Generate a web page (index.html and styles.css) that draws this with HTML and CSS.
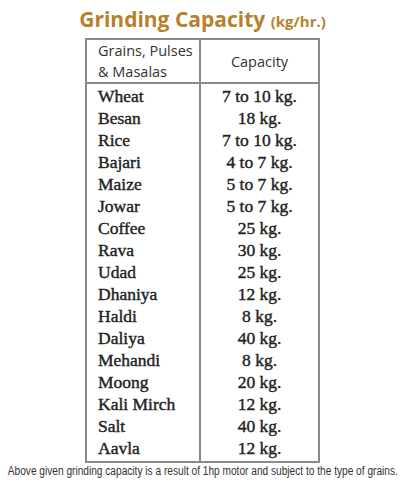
FILE: index.html
```html
<!DOCTYPE html>
<html>
<head>
<meta charset="utf-8">
<link rel="stylesheet" href="styles.css">
</head>
<body>
<div class="page">
  <h1 class="title">Grinding Capacity <span class="unit">(kg/hr.)</span></h1>
  <table class="cap">
    <thead>
      <tr>
        <th class="col-name">Grains, Pulses<br>&amp; Masalas</th>
        <th class="col-val">Capacity</th>
      </tr>
    </thead>
    <tbody>
      <tr><td class="name">Wheat</td><td class="val">7 to 10 kg.</td></tr>
      <tr><td class="name">Besan</td><td class="val">18 kg.</td></tr>
      <tr><td class="name">Rice</td><td class="val">7 to 10 kg.</td></tr>
      <tr><td class="name">Bajari</td><td class="val">4 to 7 kg.</td></tr>
      <tr><td class="name">Maize</td><td class="val">5 to 7 kg.</td></tr>
      <tr><td class="name">Jowar</td><td class="val">5 to 7 kg.</td></tr>
      <tr><td class="name">Coffee</td><td class="val">25 kg.</td></tr>
      <tr><td class="name">Rava</td><td class="val">30 kg.</td></tr>
      <tr><td class="name">Udad</td><td class="val">25 kg.</td></tr>
      <tr><td class="name">Dhaniya</td><td class="val">12 kg.</td></tr>
      <tr><td class="name">Haldi</td><td class="val">8 kg.</td></tr>
      <tr><td class="name">Daliya</td><td class="val">40 kg.</td></tr>
      <tr><td class="name">Mehandi</td><td class="val">8 kg.</td></tr>
      <tr><td class="name">Moong</td><td class="val">20 kg.</td></tr>
      <tr><td class="name">Kali Mirch</td><td class="val">12 kg.</td></tr>
      <tr><td class="name">Salt</td><td class="val">40 kg.</td></tr>
      <tr><td class="name">Aavla</td><td class="val">12 kg.</td></tr>
    </tbody>
  </table>
  <p class="note">Above given grinding capacity is a result of 1hp motor and subject to the type of grains.</p>
</div>
</body>
</html>
```
FILE: styles.css
```css
html, body {
  margin: 0;
  padding: 0;
  background: #ffffff;
}
.page {
  width: 405px;
  height: 500px;
  display: flex;
  flex-direction: column;
  align-items: center;
}
.title {
  margin: 5px 0 0 0;
  height: 29px;
  font-family: "Open Sans", "Noto Sans", sans-serif;
  font-weight: 700;
  font-size: 21px;
  line-height: 29px;
  color: #b7812c;
}
.unit {
  font-size: 15px;
  line-height: 29px;
}
.cap {
  margin-top: 4px;
  width: 235px;
  border-collapse: collapse;
  border: 2px solid #8a8a8a;
}
.cap th {
  font-family: "Open Sans", "Noto Sans", sans-serif;
  font-weight: 400;
  font-size: 14.5px;
  line-height: 21px;
  color: #333;
  height: 41px;
  padding: 0;
  border-bottom: 2px solid #8a8a8a;
}
.col-name {
  text-align: left;
  padding-left: 11px !important;
  width: 101px;
  border-right: 2px solid #8a8a8a;
}
.col-val {
  text-align: center;
}
.cap td {
  font-family: "Liberation Serif", "DejaVu Serif", serif;
  font-weight: 400;
  font-size: 17.5px;
  -webkit-text-stroke: 0.4px #222;
  color: #222;
  height: 22px;
  line-height: 22px;
  padding: 0;
}
.cap tbody tr:first-child td {
  padding-top: 1px;
}
.cap tbody tr:last-child td {
  padding-bottom: 2px;
}
.name {
  text-align: left;
  padding-left: 11px !important;
  border-right: 2px solid #8a8a8a;
}
.val {
  text-align: center;
}
.note {
  margin: 1px 0 0 0;
  font-family: "Liberation Sans", Arial, sans-serif;
  font-size: 12px;
  line-height: 14px;
  color: #333;
  white-space: nowrap;
  transform: scaleX(0.845);
}
```
